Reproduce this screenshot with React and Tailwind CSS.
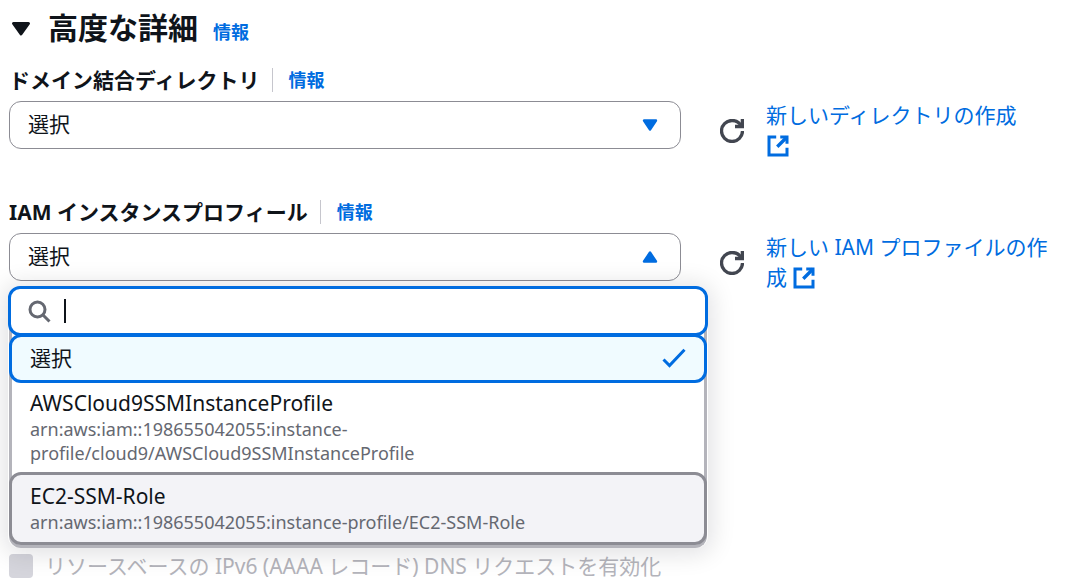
import React, { useState } from 'react';

const options = [
  { value: '', label: '選択' },
  {
    value: 'cloud9',
    label: 'AWSCloud9SSMInstanceProfile',
    arn: 'arn:aws:iam::198655042055:instance-profile/cloud9/AWSCloud9SSMInstanceProfile',
  },
  {
    value: 'ec2',
    label: 'EC2-SSM-Role',
    arn: 'arn:aws:iam::198655042055:instance-profile/EC2-SSM-Role',
  },
];

function Icon({ className, children }) {
  return (
    <svg
      viewBox="0 0 16 16"
      fill="none"
      stroke="currentColor"
      strokeWidth="2"
      aria-hidden="true"
      className={`size-6 shrink-0 ${className}`}
    >
      {children}
    </svg>
  );
}

function InfoLink() {
  return (
    <a href="#info" className="text-lg leading-6 font-bold text-[#006ce0]">
      情報
    </a>
  );
}

function ExternalIcon() {
  return (
    <Icon className="mr-1 inline-block align-[-5px]">
      <path d="M9.5 2H14v4.5" />
      <path d="m7.5 8.5 6.5-6.5" strokeWidth="2.2" />
      <path d="M14 9.2V14H2V2h4.8" />
    </Icon>
  );
}

function Field({ id, label, linkText, open, children }) {
  return (
    <div>
      <div className="flex h-[30px] items-center">
        <label htmlFor={id} className="text-[21px] leading-[30px] font-bold">
          {label}
        </label>
        <span className="mr-4 ml-3 h-6 w-px bg-[#c6c6cd]" />
        <InfoLink />
      </div>
      <div className="mt-[6px] flex h-12 items-start">
        <div className="relative flex-1">
          <select
            id={id}
            className="block h-12 w-full appearance-none rounded-xl border border-[#8c8c94] bg-white px-[18px] text-[21px] text-[#0f141a] outline-none"
          >
            <option>選択</option>
          </select>
          <Icon className="pointer-events-none absolute top-3 right-[19px] text-[#006ce0]">
            {open ? (
              <path d="M4 11h8L8 5l-4 6z" fill="currentColor" strokeWidth="1.6" strokeLinejoin="round" />
            ) : (
              <path d="M4 5h8l-4 6-4-6z" fill="currentColor" strokeWidth="1.6" strokeLinejoin="round" />
            )}
          </Icon>
          {children}
        </div>
        <button type="button" aria-label="更新" className="mt-[18px] ml-[39px] text-[#424650]">
          <Icon className="block">
            <path d="M10 5h5V0" strokeWidth="2.4" />
            <path
              d="M15 8a6.957 6.957 0 0 1-7 7 6.957 6.957 0 0 1-7-7 6.957 6.957 0 0 1 7-7 6.87 6.87 0 0 1 6.3 4"
              strokeWidth="2.2"
            />
          </Icon>
        </button>
        <a href="#create" className="-mt-px ml-[22px] w-[282px] text-[21px] leading-[30px] text-[#006ce0]">
          {linkText} <ExternalIcon />
        </a>
      </div>
    </div>
  );
}

function ProfileMenu() {
  const [query, setQuery] = useState('');
  const [selected, setSelected] = useState('');

  return (
    <div className="absolute top-[53px] -right-[27px] -left-px z-10 rounded-xl shadow-[0_2px_24px_4px_rgba(0,7,22,0.12)]">
      {/* Search box */}
      <div className="relative z-10 flex h-[50px] items-center rounded-xl border-[3px] border-[#006ce0] bg-white pl-4">
        <Icon className="text-[#656871]">
          <circle cx="7" cy="7" r="5" />
          <path d="m15 15-4.5-4.5" />
        </Icon>
        {!query && <span className="ml-[13px] h-6 w-[2px] bg-[#0f141a]" />}
        <input
          type="text"
          aria-label="検索"
          value={query}
          onChange={(e) => setQuery(e.target.value)}
          className="min-w-0 flex-1 bg-transparent text-[21px] outline-none"
        />
      </div>

      {/* Options */}
      <ul
        role="listbox"
        aria-label="IAM インスタンスプロフィール"
        className="mx-px -mt-3 rounded-b-xl border-x-[3px] border-b-[3px] border-[#b4b4bb] bg-white pt-[10px] pb-1"
      >
        {options.map((option) => {
          const isSelected = option.value === selected;
          let look = 'border-transparent';
          if (isSelected) look = 'relative z-20 border-[#006ce0] bg-[#f0fbff]';
          else if (option.value === 'ec2') look = 'relative border-[#8c8c94] bg-[#f3f3f7]';
          return (
            <li
              key={option.label}
              role="option"
              aria-selected={isSelected}
              onClick={() => setSelected(option.value)}
              className={`-mx-[3px] -mb-1 flex items-center justify-between rounded-xl border-[3px] px-[18px] pt-[7px] pb-2 ${look}`}
            >
              <div>
                <div className="text-[21px] leading-7">{option.label}</div>
                {option.arn && (
                  <div className="max-w-[510px] text-lg leading-6 text-[#656871]">{option.arn}</div>
                )}
              </div>
              {isSelected && (
                <Icon className="text-[#006ce0]">
                  <path d="m1 9 4 4 10-10.5" />
                </Icon>
              )}
            </li>
          );
        })}
      </ul>
    </div>
  );
}

export default function App() {
  return (
    <main className="bg-white pr-[18px] pl-[9px] font-['Noto_Sans','Noto_Sans_CJK_JP',sans-serif] text-[#0f141a]">
      <div className="flex h-[65px] items-start gap-[15px] pt-2">
        <Icon className="mt-2">
          <path d="M3 5h10l-5 7z" fill="currentColor" strokeLinejoin="round" />
        </Icon>
        <h2 className="text-[30px] leading-10 font-bold">高度な詳細</h2>
        <div className="mt-3 flex">
          <InfoLink />
        </div>
      </div>

      <div className="flex flex-col gap-12">
        <Field id="directory" label="ドメイン結合ディレクトリ" linkText="新しいディレクトリの作成" />
        <Field
          id="profile"
          label="IAM インスタンスプロフィール"
          linkText="新しい IAM プロファイルの作成"
          open
        >
          <ProfileMenu />
        </Field>
      </div>

      <label className="mt-[270px] flex h-[30px] items-center text-[21px] leading-[30px] text-[#b4b4bb]">
        <input
          type="checkbox"
          disabled
          className="mr-3 size-6 shrink-0 appearance-none rounded bg-[#d5d5dc]"
        />
        リソースベースの IPv6 (AAAA レコード) DNS リクエストを有効化
      </label>
    </main>
  );
}
